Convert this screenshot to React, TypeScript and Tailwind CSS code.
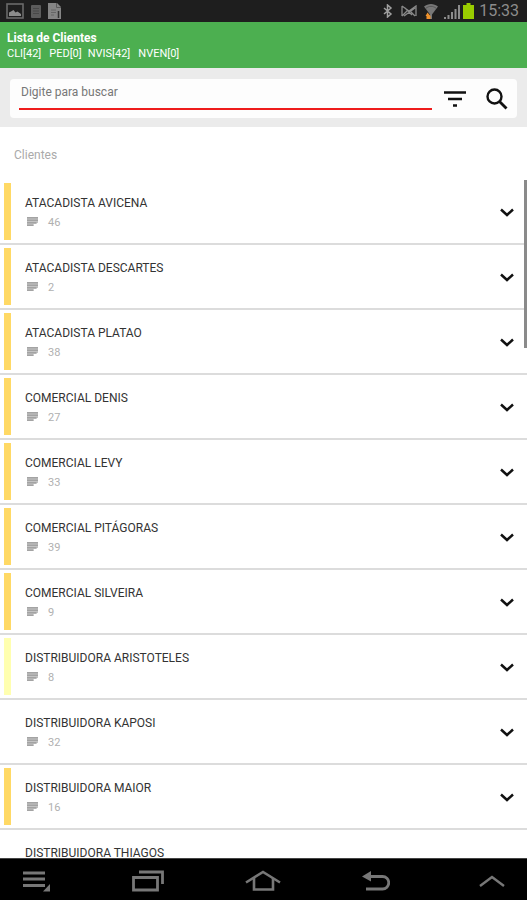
import { useState } from 'react';

type Client = { name: string; count?: number; color: string };

const clients: Client[] = [
  { name: 'ATACADISTA AVICENA', count: 46, color: 'bg-[#ffd965]' },
  { name: 'ATACADISTA DESCARTES', count: 2, color: 'bg-[#ffd965]' },
  { name: 'ATACADISTA PLATAO', count: 38, color: 'bg-[#ffd965]' },
  { name: 'COMERCIAL DENIS', count: 27, color: 'bg-[#ffd965]' },
  { name: 'COMERCIAL LEVY', count: 33, color: 'bg-[#ffd965]' },
  { name: 'COMERCIAL PITÁGORAS', count: 39, color: 'bg-[#ffd965]' },
  { name: 'COMERCIAL SILVEIRA', count: 9, color: 'bg-[#ffd965]' },
  { name: 'DISTRIBUIDORA ARISTOTELES', count: 8, color: 'bg-[#ffffb0]' },
  { name: 'DISTRIBUIDORA KAPOSI', count: 32, color: 'bg-transparent' },
  { name: 'DISTRIBUIDORA MAIOR', count: 16, color: 'bg-[#ffd965]' },
  { name: 'DISTRIBUIDORA THIAGOS', color: 'bg-transparent' },
];

function StatusBar() {
  return (
    <div className="flex h-[22px] shrink-0 items-center justify-between bg-[#1e1e1e] pl-[6px] pr-2 text-[#8c8c8c]">
      <div className="flex items-center gap-[7px]">
        <svg width="18" height="16" viewBox="0 0 18 16" fill="none">
          <rect x="1" y="1" width="16" height="14" stroke="#6a6a6a" strokeWidth="1.6" />
          <path d="M3 13V9.500l2-1L7.500 7l2 2.500 2-1 3.500 2.500v2z" fill="#8c8c8c" />
        </svg>
        <svg width="10" height="13" viewBox="0 0 10 13">
          <rect width="10" height="13" rx="1" fill="#5c5c5c" />
          <path d="M2 3.500h6M2 6h6M2 8.500h6" stroke="#484848" />
        </svg>
        <svg width="14" height="16" viewBox="0 0 14 16">
          <path d="M0 0h9l4 4v12H0z" fill="#858585" />
          <path d="M8.500 0v4.500H13" stroke="#5a5a5a" fill="none" />
          <path d="M3 7h5M3 9.500h5M3 12h3" stroke="#666" />
          <path d="M10.500 8v7" stroke="#333" strokeWidth="1.500" />
        </svg>
      </div>
      <div className="flex items-center">
        <svg className="mr-2" width="10" height="14" viewBox="0 0 10 14" fill="none" stroke="#a0a0a0" strokeWidth="1.500">
          <path d="M1 4l7 6-3.500 3V1L8 4l-7 6" />
        </svg>
        <svg className="mr-[6px]" width="17" height="12" viewBox="0 0 17 12" fill="none" stroke="#8a8a8a" strokeWidth="1.300">
          <path d="M1 1v10M1 1l7 5 7-5v10M1 11l5-5M3 11L14 3M10 7l4 4M4 3l7 7" />
        </svg>
        <svg className="mr-[6px]" width="14" height="16" viewBox="0 0 14 16">
          <path d="M0 3.500C4 0 10 0 14 3.500L8 11.500V16H6v-4.500z" fill="#777" />
          <path d="M2 5.200c3-2.500 7-2.500 10 0" stroke="#555" fill="none" />
          <path d="M3.500 9.500l3 3.500v3h-4v-3H1.500z" fill="#ee922c" />
        </svg>
        <svg className="mr-[3px]" width="16" height="15" viewBox="0 0 16 15" stroke="#8c8c8c" strokeWidth="2">
          <path d="M1 15v-2M4.500 15v-4M8 15V8M11.500 15V5M15 15V1" />
        </svg>
        <svg className="mr-[5px]" width="11" height="16" viewBox="0 0 11 16">
          <path d="M3.500 0h4v2H11v14H0V2h3.500z" fill="#99cc00" />
        </svg>
        <span className="text-[16px] leading-5">15:33</span>
      </div>
    </div>
  );
}

function ClientRow({ client }: { client: Client }) {
  const [open, setOpen] = useState(false);

  return (
    <li className="flex h-[65px] items-stretch border-b-2 border-[#dcdcdc] pl-1">
      <div className={`my-[3px] w-[7px] shrink-0 ${client.color}`} />
      <div className="ml-[14px] flex-1 pt-[15px]">
        <p className="text-[12px] leading-4 text-[#333]">{client.name}</p>
        {client.count !== undefined && (
          <div className="mt-1 flex items-center gap-[10px] pl-[2px]">
            <svg width="11" height="9" viewBox="0 0 11 9" className="mb-1">
              <path d="M0 0h11v6H9.500v1H6.500v2H0z" fill="#c4c4c4" />
              <path d="M0 0h11v1.500H0zM0 2.500h11V4H0zM0 5h9.500v1.500H0zM0 7.500h6.500V9H0z" fill="#a3a3a3" />
            </svg>
            <span className="text-[11px] leading-4 text-[#b0b0b0]">{client.count}</span>
          </div>
        )}
      </div>
      <button
        aria-label={`Expandir ${client.name}`}
        aria-expanded={open}
        onClick={() => setOpen(!open)}
        className="mr-[9px] flex w-[22px] items-center justify-center pt-[2px]"
      >
        <svg width="14" height="9" viewBox="0 0 14 9" fill="none" stroke="#111" strokeWidth="2.500">
          <path d="M1 1.500l6 5.500 6-5.500" />
        </svg>
      </button>
    </li>
  );
}

function NavBar() {
  return (
    <nav className="flex h-[42px] shrink-0 items-center justify-between border-t border-[#444] bg-black pt-[2px] pl-[23px] pr-[22px]">
      <button aria-label="Menu">
        <svg width="28" height="22" viewBox="0 0 28 22">
          <path d="M0 3h22M0 9h22M0 15.500h22" stroke="#777" strokeWidth="2.800" />
          <path d="M27 14v7.500h-7z" fill="#777" />
        </svg>
      </button>
      <button aria-label="Recentes">
        <svg width="32" height="22" viewBox="0 0 32 22" fill="none" stroke="#777" strokeWidth="2.800">
          <path d="M1.500 7.500h24v12.500h-24z" />
          <path d="M7 2h23.500v12" />
        </svg>
      </button>
      <button aria-label="Início">
        <svg width="36" height="22" viewBox="0 0 36 22" fill="none" stroke="#777" strokeWidth="2.600">
          <path d="M1 12.500L18 2l17 10.500" />
          <path d="M9 8v11.500h19V8" />
        </svg>
      </button>
      <button aria-label="Voltar">
        <svg width="28" height="20" viewBox="0 0 28 20">
          <path d="M7 5.500h13.500a6 6 0 0 1 0 12.500H4" stroke="#777" strokeWidth="2.800" fill="none" />
          <path d="M0 5.500L9 0v10.500z" fill="#777" />
        </svg>
      </button>
      <button aria-label="Mostrar" className="ml-2">
        <svg width="26" height="12" viewBox="0 0 26 12" fill="none" stroke="#777" strokeWidth="2.400">
          <path d="M1 11L13 2l12 9" />
        </svg>
      </button>
    </nav>
  );
}

export default function App() {
  const [query, setQuery] = useState('');
  const visible = clients.filter(c => c.name.toLowerCase().includes(query.toLowerCase()));

  return (
    <div className="flex h-screen flex-col overflow-hidden bg-white font-['Roboto',sans-serif]">
      <StatusBar />

      <header className="h-[46px] shrink-0 bg-[#4caf50] px-[7px] pt-2 text-white">
        <h1 className="text-[12px] leading-4 font-bold">Lista de Clientes</h1>
        <div className="flex text-[11px] leading-4">
          <span className="mr-2">CLI[42]</span>
          <span className="mr-[6px]">PED[0]</span>
          <span className="mr-2">NVIS[42]</span>
          <span>NVEN[0]</span>
        </div>
      </header>

      {/* Search */}
      <div className="shrink-0 bg-[#ebebeb] px-[10px] pt-[11px] pb-[9px]">
        <div className="flex h-[39px] items-center rounded-sm bg-[#fdfdfd] pr-[9px] pl-[9px]">
          <input
            type="text"
            aria-label="Buscar clientes"
            placeholder="Digite para buscar"
            value={query}
            onChange={e => setQuery(e.target.value)}
            className="mb-2 h-[31px] min-w-0 flex-1 self-start border-b-2 border-[#ee1c1c] px-[2px] pb-1 text-[12px] text-[#333] outline-none placeholder:text-[#777]"
          />
          <button aria-label="Filtrar" className="ml-3">
            <svg width="22" height="16" viewBox="0 0 22 16" stroke="#111" strokeWidth="2.400">
              <path d="M0 1.500h22M4 8h14M9 14.500h4" />
            </svg>
          </button>
          <button aria-label="Buscar" className="ml-5">
            <svg width="22" height="22" viewBox="0 0 22 22" fill="none" stroke="#111">
              <circle cx="8.500" cy="8.500" r="7" strokeWidth="2.400" />
              <path d="M13.500 13.500l7 7" strokeWidth="2.800" />
            </svg>
          </button>
        </div>
      </div>

      <main className="relative flex min-h-0 flex-1 flex-col">
        <h2 className="shrink-0 px-[14px] pt-5 pb-[17px] text-[12px] leading-4 text-[#aaa]">Clientes</h2>
        <ul className="min-h-0 flex-1 overflow-hidden">
          {visible.map(client => (
            <ClientRow key={client.name} client={client} />
          ))}
        </ul>
        {/* scroll thumb */}
        <div className="absolute top-[53px] right-0 h-[168px] w-[3px] bg-[#8a8a8a]" />
      </main>

      <NavBar />
    </div>
  );
}
